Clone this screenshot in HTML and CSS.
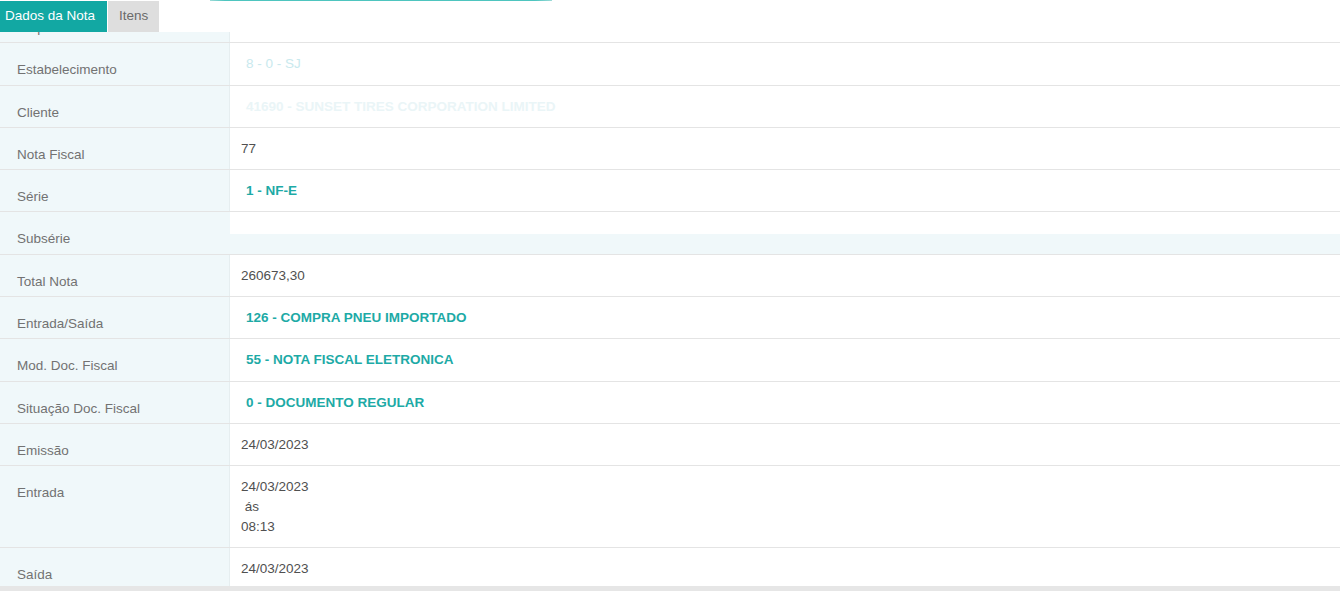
FILE: index.html
```html
<!DOCTYPE html>
<html lang="pt-BR">
<head>
    <meta charset="UTF-8">
    <title>Dados da Nota</title>
<link rel="stylesheet" href="styles.css">
</head>
<body>
    <div class="card">
        <div class="tabs">
            <div class="loading-bar"></div>
            <div class="tab active">Dados da Nota</div>
            <div class="tab">Itens</div>
        </div>

        <div class="sheet">
            <div class="row">
                <div class="label">Empresa</div>
                <div class="value"><span class="link">8 - EMPRESA</span></div>
            </div>
            <div class="row">
                <div class="label">Estabelecimento</div>
                <div class="value"><span class="link fade-1">8 - 0 - SJ</span></div>
            </div>
            <div class="row">
                <div class="label">Cliente</div>
                <div class="value"><span class="link fade-2">41690 - SUNSET TIRES CORPORATION LIMITED</span></div>
            </div>
            <div class="row">
                <div class="label">Nota Fiscal</div>
                <div class="value">77</div>
            </div>
            <div class="row">
                <div class="label">Série</div>
                <div class="value"><span class="link">1 - NF-E</span></div>
            </div>
            <div class="row split">
                <div class="label">Subsérie</div>
                <div class="value"></div>
            </div>
            <div class="row">
                <div class="label">Total Nota</div>
                <div class="value">260673,30</div>
            </div>
            <div class="row">
                <div class="label">Entrada/Saída</div>
                <div class="value"><span class="link">126 - COMPRA PNEU IMPORTADO</span></div>
            </div>
            <div class="row">
                <div class="label">Mod. Doc. Fiscal</div>
                <div class="value"><span class="link">55 - NOTA FISCAL ELETRONICA</span></div>
            </div>
            <div class="row">
                <div class="label">Situação Doc. Fiscal</div>
                <div class="value"><span class="link">0 - DOCUMENTO REGULAR</span></div>
            </div>
            <div class="row">
                <div class="label">Emissão</div>
                <div class="value">24/03/2023</div>
            </div>
            <div class="row">
                <div class="label">Entrada</div>
                <div class="value">24/03/2023<br>&nbsp;ás<br>08:13</div>
            </div>
            <div class="row">
                <div class="label">Saída</div>
                <div class="value">24/03/2023</div>
            </div>
        </div>
    </div>
</body>
</html>
```

FILE: styles.css
```css
body {
    font-family: "Liberation Sans", Arial, sans-serif;
    font-size: 13.5px;
    margin: 0;
    padding: 0;
    background-color: #e6e6e6;
    overflow: hidden;
}
.card {
    height: 586px;
    overflow: hidden;
    background-color: white;
    box-shadow: 0 1px 3px rgba(0, 0, 0, 0.25);
}
.tabs {
    position: relative;
    z-index: 2;
    display: flex;
    height: 32px;
    padding-top: 1px;
    box-sizing: border-box;
    background-color: white;
}
.loading-bar {
    position: absolute;
    top: 0;
    left: 210px;
    width: 342px;
    height: 1px;
    background: linear-gradient(to right, #9edbd8 0, #4ec5bf 15px, #4ec5bf 325px, #9edbd8 100%);
}
.tab {
    padding: 0 12px 0 5px;
    line-height: 30px;
    color: #6a6a6a;
    background-color: #dedede;
    margin-right: 1px;
}
.tab.active {
    color: white;
    background-color: #12a8a3;
}
.tab + .tab {
    padding: 0 11px;
}
.sheet {
    margin-top: -31px;
}
.row {
    display: grid;
    grid-template-columns: 230px 1fr;
    min-height: 41.3px;
    border-bottom: 1px solid #e4e4e4;
    line-height: 20px;
}
.label {
    padding: 17px 0 0 17px;
    color: #727272;
    background-color: #f0f8fa;
    border-right: 1px solid #e6eef0;
}
.value {
    padding: 11px 11px 10px 11px;
    color: #505050;
}
.link {
    padding-left: 5px;
    font-weight: bold;
    color: #1daaa6;
}
.fade-1 {
    font-weight: normal;
    color: #c9e9ee;
}
.fade-2 {
    color: #eaf5f7;
}
.split .value {
    background: linear-gradient(to bottom, white 0, white 22px, #f0f8fa 22px);
}
.split .label {
    border-right-color: #f0f8fa;
}
```
